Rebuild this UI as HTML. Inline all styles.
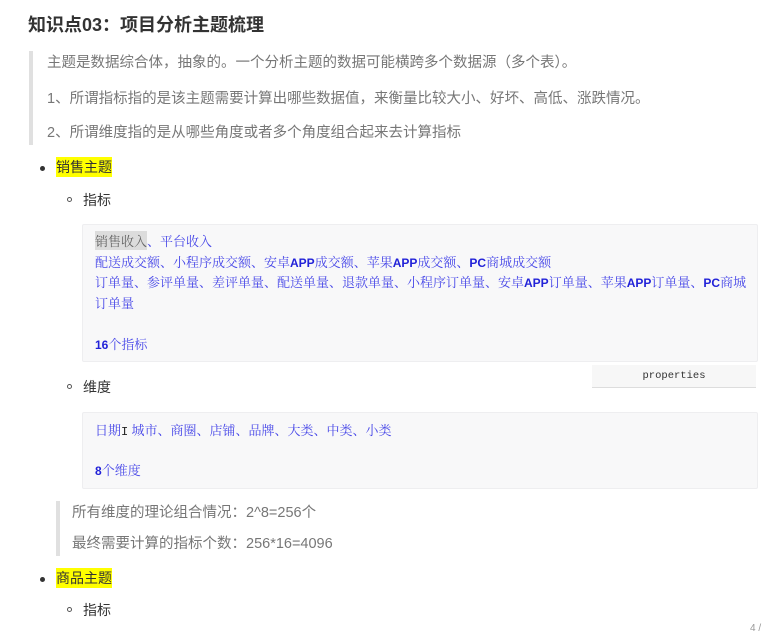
<!DOCTYPE html>
<html><head><meta charset="utf-8"><style>
body{margin:0;width:765px;height:634px;background:#fff;position:relative;overflow:hidden;font-family:"Liberation Sans","Noto Sans CJK SC",sans-serif;color:#333}
.a{position:absolute;white-space:nowrap;line-height:1}
.g{color:#777;font-size:14.5px}
.bar{position:absolute;background:#e0e0e0}
.box{position:absolute;background:#f8f8f9;border:1px solid #eeeef0;border-radius:2px}
.c{position:absolute;white-space:nowrap;font-family:"Noto Serif CJK SC","WenQuanYi Zen Hei",serif;font-size:13px;color:#4848e8;line-height:1}
.c b{font-family:"Liberation Sans",sans-serif;color:#2222d8;font-size:12px}
.dot{position:absolute;width:5px;height:5px;border-radius:50%;background:#333}
.cir{position:absolute;width:5px;height:5px;border-radius:50%;border:1px solid #555;box-sizing:border-box}
.hl{background:#ffff00;color:#333;font-size:14px;padding:2px 0}
</style></head><body>
<div class="a" style="left:28px;top:16px;font-size:18px;font-weight:bold;color:#333">知识点03：项目分析主题梳理</div>
<div class="bar" style="left:29px;top:51px;width:4px;height:94px"></div>
<div class="a g" style="left:47px;top:56px">主题是数据综合体，抽象的。一个分析主题的数据可能横跨多个数据源（多个表）。</div>
<div class="a g" style="left:47px;top:92px">1、所谓指标指的是该主题需要计算出哪些数据值，来衡量比较大小、好坏、高低、涨跌情况。</div>
<div class="a g" style="left:47px;top:126px">2、所谓维度指的是从哪些角度或者多个角度组合起来去计算指标</div>
<div class="dot" style="left:40px;top:166px"></div>
<div class="a" style="left:56px;top:160px"><span class="hl">销售主题</span></div>
<div class="cir" style="left:67px;top:197px"></div>
<div class="a" style="left:83px;top:193px;font-size:14px">指标</div>
<div class="box" style="left:82px;top:224px;width:674px;height:136px"></div>
<div class="c" style="left:95px;top:234px"><span style="background:#dcdcdc;color:#666">销售收入</span>、平台收入</div>
<div class="c" style="left:95px;top:255px">配送成交额、小程序成交额、安卓<b>APP</b>成交额、苹果<b>APP</b>成交额、<b>PC</b>商城成交额</div>
<div class="c" style="left:95px;top:275px">订单量、参评单量、差评单量、配送单量、退款单量、小程序订单量、安卓<b>APP</b>订单量、苹果<b>APP</b>订单量、<b>PC</b>商城</div>
<div class="c" style="left:95px;top:296px">订单量</div>
<div class="c" style="left:95px;top:337px"><b>16</b>个指标</div>
<div style="position:absolute;left:592px;top:365px;width:164px;height:22px;background:#f7f7f7;border-bottom:1px solid #ddd;font-family:'Liberation Mono',monospace;font-size:10.5px;color:#333;text-align:center;line-height:22px">properties</div>
<div class="cir" style="left:67px;top:384px"></div>
<div class="a" style="left:83px;top:380px;font-size:14px">维度</div>
<div class="box" style="left:82px;top:412px;width:674px;height:75px"></div>
<div class="c" style="left:95px;top:423px">日期<span style="color:#222;font-family:'Liberation Mono';font-size:12px">I</span> 城市、商圈、店铺、品牌、大类、中类、小类</div>
<div class="c" style="left:95px;top:463px"><b>8</b>个维度</div>
<div class="bar" style="left:56px;top:501px;width:4px;height:55px"></div>
<div class="a g" style="left:72px;top:506px">所有维度的理论组合情况：2^8=256个</div>
<div class="a g" style="left:72px;top:537px">最终需要计算的指标个数：256*16=4096</div>
<div class="dot" style="left:40px;top:577px"></div>
<div class="a" style="left:56px;top:571px"><span class="hl">商品主题</span></div>
<div class="cir" style="left:67px;top:607px"></div>
<div class="a" style="left:83px;top:603px;font-size:14px">指标</div>
<div class="a" style="left:750px;top:624px;font-size:10px;color:#999">4 /</div>
</body></html>
